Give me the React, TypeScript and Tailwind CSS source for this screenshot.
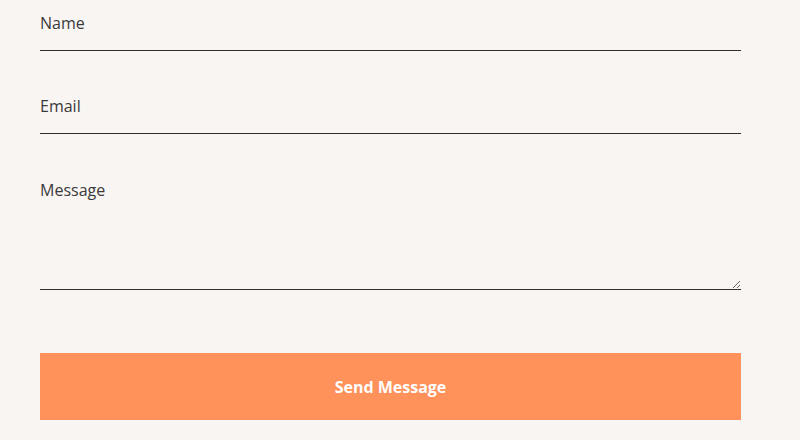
export default function App() {
  return (
    <div className="w-[800px] h-[440px] bg-[#f9f5f3] overflow-hidden" style={{ fontFamily: "'Open Sans', Lato, sans-serif" }}>
      <form className="w-[701px] ml-10 flex flex-col" onSubmit={(e) => e.preventDefault()}>
        <input
          type="text"
          placeholder="Name"
          className="h-[51px] pt-[1px] pb-[6px] bg-transparent border-b border-[#2f2f2f] text-[16px] text-[#333] placeholder:text-[#3a3a3a] outline-none"
        />
        <input
          type="email"
          placeholder="Email"
          className="h-[51px] mt-8 pt-[1px] pb-[6px] bg-transparent border-b border-[#2f2f2f] text-[16px] text-[#333] placeholder:text-[#3a3a3a] outline-none"
        />
        <textarea
          placeholder="Message"
          className="h-[124px] mt-8 pt-[13px] leading-[22px] bg-transparent border-b border-[#2f2f2f] text-[16px] text-[#333] placeholder:text-[#3a3a3a] outline-none"
        />
        <button
          type="submit"
          className="h-[67px] mt-[63px] bg-[#ff915a] text-white font-bold text-[16px]"
        >
          Send Message
        </button>
      </form>
    </div>
  );
}
